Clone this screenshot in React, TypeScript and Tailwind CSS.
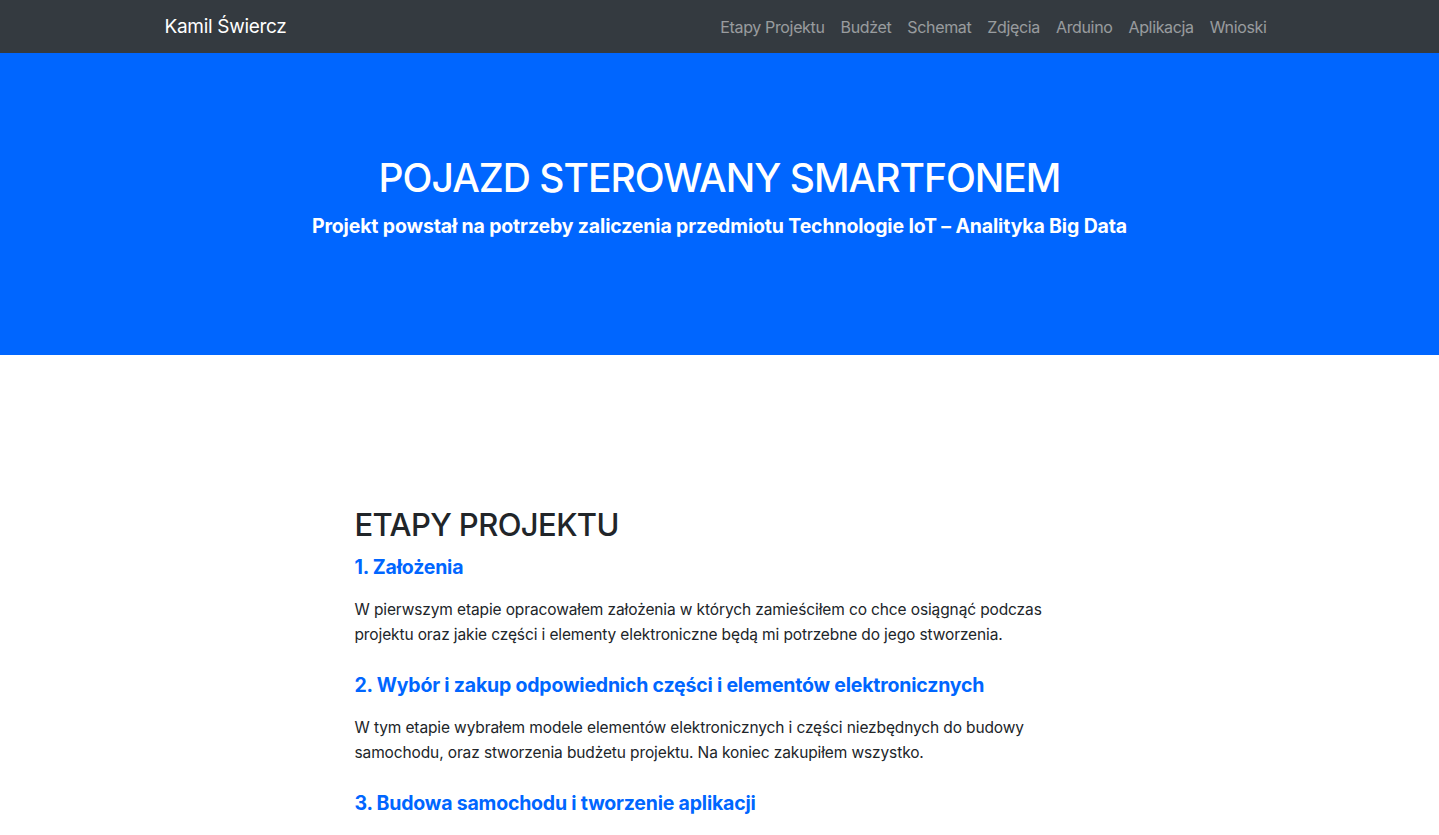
import React from 'react';

const links = ['Etapy Projektu', 'Budżet', 'Schemat', 'Zdjęcia', 'Arduino', 'Aplikacja', 'Wnioski'];

const steps = [
  {
    title: '1. Założenia',
    text: 'W pierwszym etapie opracowałem założenia w których zamieściłem co chce osiągnąć podczas projektu oraz jakie części i elementy elektroniczne będą mi potrzebne do jego stworzenia.',
  },
  {
    title: '2. Wybór i zakup odpowiednich części i elementów elektronicznych',
    text: 'W tym etapie wybrałem modele elementów elektronicznych i części niezbędnych do budowy samochodu, oraz stworzenia budżetu projektu. Na koniec zakupiłem wszystko.',
  },
  {
    title: '3. Budowa samochodu i tworzenie aplikacji',
    text: '',
  },
];

export default function App() {
  return (
    <div className="min-h-screen bg-white text-[#212529] font-['Inter','Liberation_Sans',sans-serif]">
      <nav className="bg-[#343a40] h-[53px]">
        <div className="max-w-[1140px] mx-auto px-[15px] h-full flex items-center justify-between">
          <a className="text-white text-[19px] tracking-[-0.3px] mt-[1px]">Kamil Świercz</a>
          <ul className="flex">
            {links.map((l) => (
              <li key={l}>
                <a className="px-2 text-[16px] tracking-[-0.35px] text-white/50">{l}</a>
              </li>
            ))}
          </ul>
        </div>
      </nav>

      <header className="bg-[#0066ff] h-[302px] text-white text-center pt-[99px]">
        <h1 className="text-[39px] leading-[52px] font-medium tracking-[-1px]">POJAZD STEROWANY SMARTFONEM</h1>
        <p className="text-[19.5px] leading-7 font-bold tracking-[-0.15px] mt-[8px]">
          Projekt powstał na potrzeby zaliczenia przedmiotu Technologie IoT – Analityka Big Data
        </p>
      </header>

      <section className="pt-[151px]">
        <div className="w-[730px] mx-auto">
          <h2 className="text-[31px] leading-[38px] font-medium tracking-[-0.6px] mb-[11px]">ETAPY PROJEKTU</h2>
          {steps.map((s) => (
            <div key={s.title}>
              <h4 className="text-[19.5px] leading-6 font-bold text-[#0066ff] tracking-[-0.2px] mb-[18px]">{s.title}</h4>
              {s.text && (
                <p className="text-[15.5px] leading-[25px] tracking-[-0.12px] mb-[26px] pr-[20px]">{s.text}</p>
              )}
            </div>
          ))}
        </div>
      </section>
    </div>
  );
}
